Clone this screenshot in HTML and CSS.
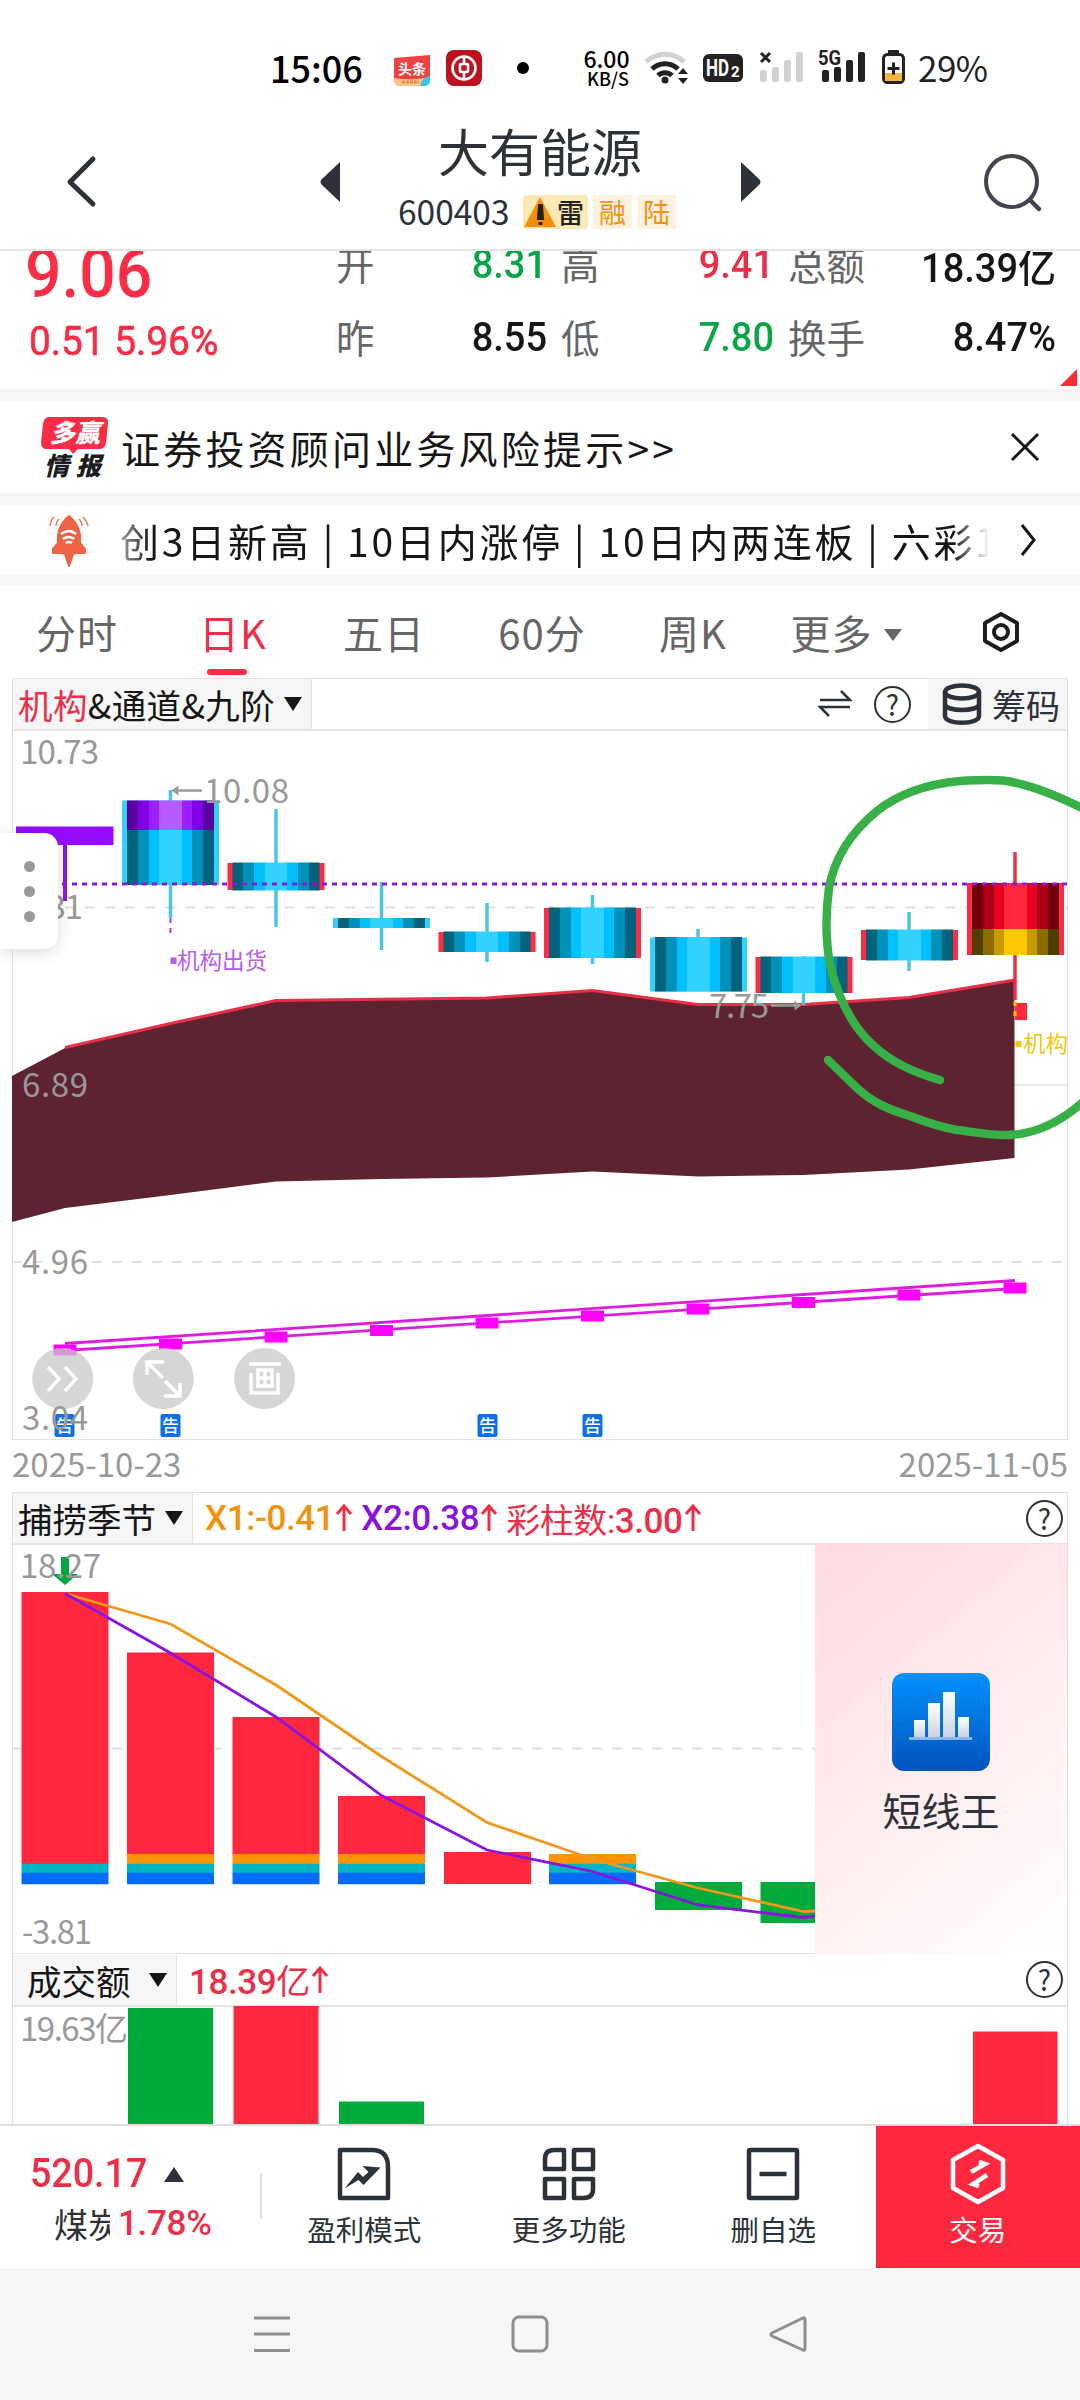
FILE: index.html
```
<!DOCTYPE html>
<html lang="zh-CN">
<head>
    <meta charset="UTF-8">
    <meta name="viewport" content="width=device-width, initial-scale=1.0">
    <title>大有能源 600403</title>
    <link rel="stylesheet" href="styles.css">
</head>
<body>
    <!-- 状态栏 -->
    <div class="status-bar">
        <span class="clock">15:06</span>
        <svg class="app-icons" width="140" height="44" viewBox="390 46 140 44">
            <path d="M394 58l36-3v24q0 7-7 7h-22q-7 0-7-7z" fill="#f04142"/>
            <path d="M394 78q18 3 36-1v2q0 7-7 7h-22q-7 0-7-7z" fill="#fbc48a"/>
            <path d="M430 76v4q0 6-6 6h-4q2-9 10-10z" fill="#35c3ee"/>
            <text x="398" y="74" class="app-text">头条</text>
            <path d="M402 82h17" stroke="#e88a4a" stroke-width="3" stroke-dasharray="3 1"/>
            <rect x="446" y="50" width="36" height="36" rx="8" fill="#bd1120"/>
            <circle cx="464" cy="68" r="11.500" fill="none" stroke="#fff" stroke-width="2.600"/>
            <path d="M464 57v7M464 72v7" stroke="#fff" stroke-width="2.600"/>
            <rect x="460" y="64" width="8" height="8" rx="1" fill="none" stroke="#fff" stroke-width="2.600"/>
            <circle cx="523" cy="68" r="6" fill="#000"/>
        </svg>
        <span class="speed"><b>6.00</b><i>KB/S</i></span>
        <svg class="signals" width="270" height="44" viewBox="640 46 270 44">
            <g fill="none" stroke-width="5">
                <path d="M646 62a27 27 0 0 1 38 0" stroke="#d2d2d2"/>
                <path d="M652 69a18.500 18.500 0 0 1 26 0" stroke="#222"/>
                <path d="M658 75.500a10 10 0 0 1 14 0" stroke="#222"/>
            </g>
            <circle cx="665" cy="80" r="3.500" fill="#222"/>
            <path d="M683 68l5 6h-10zM683 84l-5-6h10z" fill="#222"/>
            <rect x="703" y="54" width="40" height="28" rx="6" fill="#222"/>
            <text x="706" y="76" class="hd" textLength="23" lengthAdjust="spacingAndGlyphs">HD</text>
            <text x="731" y="77" class="hd small" textLength="9">2</text>
            <path d="M761 53l9 9M770 53l-9 9" stroke="#222" stroke-width="3"/>
            <g fill="#d2d2d2">
                <rect x="760" y="70" width="7" height="12" rx="2"/><rect x="772" y="67" width="7" height="15" rx="2"/>
                <rect x="784" y="60" width="7" height="22" rx="2"/><rect x="796" y="52" width="7" height="30" rx="2"/>
            </g>
            <g fill="#222">
                <rect x="822" y="70" width="7" height="12" rx="2"/><rect x="834" y="67" width="7" height="15" rx="2"/>
                <rect x="846" y="60" width="7" height="22" rx="2"/><rect x="858" y="52" width="7" height="30" rx="2"/>
            </g>
            <text x="818" y="65" class="net" textLength="23" lengthAdjust="spacingAndGlyphs">5G</text>
            <rect x="883.500" y="54.500" width="20" height="28" rx="4" fill="#fff" stroke="#222" stroke-width="3"/>
            <rect x="888" y="50" width="11" height="4" rx="1" fill="#222"/>
            <rect x="885" y="73" width="17" height="8" fill="#f6b63c"/>
            <path d="M887.500 68.500h12M893.500 62.500v12" stroke="#222" stroke-width="3"/>
        </svg>
        <span class="battery">29%</span>
    </div>

    <!-- 标题栏 -->
    <div class="header">
        <svg width="50" height="60" viewBox="60 151 50 60"><path d="M93 159L70 182l23 22" fill="none" stroke="#2c3238" stroke-width="5" stroke-linecap="round" stroke-linejoin="round"/></svg>
        <svg class="prev" width="24" height="44" viewBox="318 159 24 44"><path d="M340 162v40l-18-17q-3-3 0-6z" fill="#2c3238"/></svg>
        <div class="stock">
            <h1>大有能源</h1>
            <div class="code">
                <span class="digits">600403</span>
                <span class="tag mine"><svg width="34" height="34" viewBox="0 0 34 34"><path d="M17 2L33 32H1z" fill="#f98e08"/><path d="M17 11l-1 12h3l-1-12zM17.500 27v3" stroke="#222" stroke-width="4"/></svg>雷</span>
                <span class="tag">融</span>
                <span class="tag">陆</span>
            </div>
        </div>
        <svg class="next" width="24" height="44" viewBox="739 159 24 44"><path d="M741 162v40l18-17q3-3 0-6z" fill="#2c3238"/></svg>
        <svg class="search" width="64" height="64" viewBox="980 149 64 64"><circle cx="1011.500" cy="181.500" r="25.500" fill="none" stroke="#44444e" stroke-width="4"/><path d="M1030 200l9 9" stroke="#44444e" stroke-width="4.500" stroke-linecap="round"/></svg>
    </div>

    <!-- 行情 -->
    <div class="quote">
        <div class="price">
            <div class="last">9.06</div>
            <div class="change">0.51 5.96%</div>
        </div>
        <div class="quote-grid">
            <span>开</span><b class="green">8.31</b><span>高</span><b class="red">9.41</b><span>总额</span><b>18.39<em>亿</em></b>
            <span>昨</span><b>8.55</b><span>低</span><b class="green">7.80</b><span>换手</span><b>8.47%</b>
        </div>
        <i class="corner"></i>
    </div>

    <div class="notice">
        <svg width="70" height="66" viewBox="40 410 70 66">
            <path d="M49 413h53q7 0 6 7l-2 19q-1 6-7 6h-21l-5 5-4-5h-22q-6 0-6-6l2-19q1-7 6-7z" fill="#fa2c46"/>
            <text x="50" y="438" class="logo-text" fill="#fff" textLength="50">多赢</text>
            <text x="44" y="471" class="logo-text" fill="#1d1d1f" textLength="57">情报</text>
        </svg>
        <span>证券投资顾问业务风险提示&gt;&gt;</span>
        <svg class="close" width="34" height="34" viewBox="0 0 34 34"><path d="M4 4l26 26M30 4L4 30" stroke="#161616" stroke-width="3"/></svg>
    </div>

    <div class="ticker">
        <svg width="46" height="54" viewBox="46 511 46 54">
            <path d="M69 514q9 7 11 19v8l5 6v4h-8l-4 1-4 12-4-12-4-1h-8v-4l5-6v-8q2-12 11-19z" fill="#ee6345" stroke="#ee6345" stroke-width="2" stroke-linejoin="round"/>
            <path d="M61 532q8-6 15 0M63 537q6-4 11 0M66 541q3-2 6 0" fill="none" stroke="#fff" stroke-width="2.500"/>
            <path d="M54 515q-4 4-4 9M59 517q-3 3-3 7M83 515q4 4 5 9M79 517q3 3 3 7" fill="none" stroke="#f0775c" stroke-width="1.500"/>
        </svg>
        <div class="ticker-text">创3日新高<s>|</s>10日内涨停<s>|</s>10日内两连板<s>|</s>六彩1</div>
        <svg class="more" width="20" height="36" viewBox="0 0 20 36"><path d="M3 3l12 15L3 33" fill="none" stroke="#161616" stroke-width="3"/></svg>
    </div>

    <!-- 周期切换 -->
    <div class="tabs">
        <span>分时</span>
        <span class="active">日K</span>
        <span>五日</span>
        <span>60分</span>
        <span>周K</span>
        <span>更多<svg width="18" height="12" viewBox="0 0 18 12"><path d="M0 0h18L9 12z" fill="#666"/></svg></span>
        <svg class="setting" width="40" height="42" viewBox="0 0 40 42"><path d="M20 3l16 9v18l-16 9-16-9V12z" fill="none" stroke="#1d1d1f" stroke-width="4" stroke-linejoin="round"/><circle cx="20" cy="21" r="7" fill="none" stroke="#1d1d1f" stroke-width="4"/></svg>
    </div>

    <!-- K线主图 -->
    <div class="panel main-panel">
        <div class="panel-head">
            <div class="indicator main"><span class="red">机构</span>&amp;通道&amp;九阶<i class="caret"></i></div>
            <svg class="swap" width="34" height="32" viewBox="0 0 34 32"><path d="M2 12h30L23 3M32 19H2l9 9" fill="none" stroke="#2c3238" stroke-width="2.500"/></svg>
            <span class="help">?</span>
            <div class="chips">
                <svg width="40" height="42" viewBox="0 0 40 42"><g fill="none" stroke="#2c3238" stroke-width="4.500"><ellipse cx="20" cy="9" rx="17" ry="6.500"/><path d="M3 9v24c0 9 34 9 34 0V9M3 21c0 8 34 8 34 0"/></g></svg>
                筹码
            </div>
        </div>
        <svg class="chart" width="1054" height="707" viewBox="13 731 1054 707">
            <defs>
                <linearGradient id="blue">
                    <stop offset=".125" stop-color="#00627b"/><stop offset=".125" stop-color="#0090b8"/>
                    <stop offset=".25" stop-color="#0090b8"/><stop offset=".25" stop-color="#00bffa"/>
                    <stop offset=".370" stop-color="#00bffa"/><stop offset=".370" stop-color="#33d1ff"/>
                    <stop offset=".630" stop-color="#33d1ff"/><stop offset=".630" stop-color="#00bffa"/>
                    <stop offset=".75" stop-color="#00bffa"/><stop offset=".75" stop-color="#0090b8"/>
                    <stop offset=".875" stop-color="#0090b8"/><stop offset=".875" stop-color="#00627b"/>
                </linearGradient>
                <linearGradient id="purple">
                    <stop offset=".125" stop-color="#5b00a0"/><stop offset=".125" stop-color="#8200e2"/>
                    <stop offset=".25" stop-color="#8200e2"/><stop offset=".25" stop-color="#9c20ff"/>
                    <stop offset=".370" stop-color="#9c20ff"/><stop offset=".370" stop-color="#b65bff"/>
                    <stop offset=".630" stop-color="#b65bff"/><stop offset=".630" stop-color="#9c20ff"/>
                    <stop offset=".75" stop-color="#9c20ff"/><stop offset=".75" stop-color="#8200e2"/>
                    <stop offset=".875" stop-color="#8200e2"/><stop offset=".875" stop-color="#5b00a0"/>
                </linearGradient>
                <linearGradient id="crimson">
                    <stop offset=".125" stop-color="#70000e"/><stop offset=".125" stop-color="#aa0016"/>
                    <stop offset=".25" stop-color="#aa0016"/><stop offset=".25" stop-color="#e8001f"/>
                    <stop offset=".370" stop-color="#e8001f"/><stop offset=".370" stop-color="#ff293f"/>
                    <stop offset=".630" stop-color="#ff293f"/><stop offset=".630" stop-color="#e8001f"/>
                    <stop offset=".75" stop-color="#e8001f"/><stop offset=".75" stop-color="#aa0016"/>
                    <stop offset=".875" stop-color="#aa0016"/><stop offset=".875" stop-color="#70000e"/>
                </linearGradient>
                <linearGradient id="gold">
                    <stop offset=".125" stop-color="#4e3e00"/><stop offset=".125" stop-color="#8a6c00"/>
                    <stop offset=".25" stop-color="#8a6c00"/><stop offset=".25" stop-color="#c69a00"/>
                    <stop offset=".370" stop-color="#c69a00"/><stop offset=".370" stop-color="#ffc805"/>
                    <stop offset=".630" stop-color="#ffc805"/><stop offset=".630" stop-color="#c69a00"/>
                    <stop offset=".75" stop-color="#c69a00"/><stop offset=".75" stop-color="#8a6c00"/>
                    <stop offset=".875" stop-color="#8a6c00"/><stop offset=".875" stop-color="#4e3e00"/>
                </linearGradient>
                <clipPath id="plot"><rect x="12" y="731" width="1055" height="707"/></clipPath>
            </defs>

            <!-- 网格 -->
            <path class="grid" d="M65 907.500H1067M12 1262H1067"/>
            <path d="M12 1085H1067" stroke="#e9e9e9" stroke-width="2"/>

            <!-- 通道 -->
            <path d="M12 1076L65 1048 170.500 1023.500 276 1000.500 487 998 592.500 990.500 698 1004.500 803.500 1004.500 909 997.500 1014.500 980V1158L909 1169.500 803.500 1175 698 1176.500 592.500 1171.500 487 1177.500 381.500 1179 276 1181.500 170.500 1195 65 1208 12 1222z" fill="#5e2331"/>
            <path d="M65 1047.500L170.500 1023.500 276 1000.500 487 998 592.500 990.500 698 1004.500 803.500 1004.500 909 997.500 1015 980" fill="none" stroke="#e83049" stroke-width="3"/>

            <!-- 影线 -->
            <g fill="none" stroke="#4cc4e6" stroke-width="3.500">
                <path d="M170.500 790V918M276 809V927M381.500 882V950M487 903V962M592.500 895V964M698 929V940M803.500 956V1005M909 912V971"/>
            </g>
            <path d="M1015 852V1000" stroke="#e83049" stroke-width="3.500"/>
            <path d="M170.500 918v16" stroke="#a93df0" stroke-width="2" stroke-dasharray="5 5"/>

            <!-- 蜡烛 -->
            <path d="M65 845v56" stroke="#8a18e8" stroke-width="4"/>
            <rect x="16" y="826.500" width="97.500" height="18.500" fill="#960cff"/>
            <g fill="#33d1ff">
                <rect x="122" y="800.500" width="97" height="84.500"/>
                <rect x="333" y="918" width="97" height="10"/>
                <rect x="650" y="937.500" width="97" height="54"/>
            </g>
            <g fill="#fc2c44">
                <rect x="227.500" y="863" width="97" height="27"/>
                <rect x="438.500" y="932" width="97" height="20"/>
                <rect x="544" y="908" width="97" height="50"/>
                <rect x="755.500" y="957" width="97" height="36"/>
                <rect x="861" y="930" width="97" height="30"/>
                <rect x="967" y="883" width="97" height="72"/>
            </g>
            <rect x="127" y="800.500" width="87" height="29.500" fill="url(#purple)"/>
            <g fill="url(#blue)">
                <rect x="127" y="830" width="87" height="55"/>
                <rect x="232.500" y="862.500" width="87" height="28"/>
                <rect x="338" y="918" width="87" height="10"/>
                <rect x="443.500" y="931.500" width="87" height="20.500"/>
                <rect x="549" y="907.500" width="87" height="50.500"/>
                <rect x="655" y="937" width="87" height="54.500"/>
                <rect x="760.500" y="956.500" width="87" height="36.500"/>
                <rect x="866" y="929.500" width="87" height="31"/>
            </g>
            <rect x="972" y="883" width="87" height="46" fill="url(#crimson)"/>
            <rect x="972" y="929" width="87" height="26" fill="url(#gold)"/>
            <path d="M62 884H1067" stroke="#8b1ad6" stroke-width="3" stroke-dasharray="5 5"/>

            <rect x="1015" y="1003" width="12" height="17" fill="#ff283e"/>
            <path d="M1015 1001v5M1015 1011v5" stroke="#ffc805" stroke-width="3"/>
            <rect x="170.500" y="957.500" width="6" height="6.500" fill="#b45cf5"/>
            <text class="mark" x="177" y="968.500" fill="#b45cf0">机构出货</text>
            <g clip-path="url(#plot)">
                <rect x="1015.500" y="1041" width="6" height="6" fill="#ffc40a"/>
                <text class="mark" x="1023" y="1052" fill="#f0c419">机构</text>
            </g>

            <!-- 九阶线 -->
            <path d="M65 1343.500L1015 1280.500M65 1350.500L1015 1288.500" fill="none" stroke="#de1cde" stroke-width="2.800"/>
            <path d="M53.500 1350h23M159 1344h23M264.500 1337h23M370 1330.500h23M475.500 1323h23M581 1316h23M686.500 1309h23M792 1302.500h23M897.500 1295h23M1003.500 1288h23" stroke="#ff00ff" stroke-width="11"/>

            <!-- 悬浮按钮 -->
            <g fill="#c8c8c8" fill-opacity=".75">
                <circle cx="62.700" cy="1378.500" r="30.500"/><circle cx="163.300" cy="1378.500" r="30.500"/><circle cx="264.500" cy="1378.500" r="30.500"/>
            </g>
            <g fill="none" stroke="#fff" stroke-width="3.500">
                <path d="M48 1367l11 12-11 12M65 1367l11 12-11 12"/>
                <path d="M163 1378l-16-16M147 1375v-13h17M165 1381l15 15M180 1383v13h-16"/>
                <path d="M249 1364h32M251 1373v20h27v-20M258 1370h14v16h-14zM265 1370v16M258 1378h14"/>
            </g>

            <!-- 公告 -->
            <g fill="#0c70ea">
                <rect x="54.500" y="1414" width="20" height="23" rx="2"/><rect x="160.500" y="1414" width="20" height="23" rx="2"/>
                <rect x="477.500" y="1414" width="20" height="23" rx="2"/><rect x="582.500" y="1414" width="20" height="23" rx="2"/>
            </g>
            <g class="bulletin">
                <text x="64.500" y="1432">告</text><text x="170.500" y="1432">告</text><text x="487.500" y="1432">告</text><text x="592.500" y="1432">告</text>
            </g>

            <g class="axis">
                <text x="20" y="764" textLength="79">10.73</text>
                <text x="22" y="919" textLength="61">8.31</text>
                <text x="22" y="1097" textLength="66">6.89</text>
                <text x="22" y="1274" textLength="66">4.96</text>
                <text x="22" y="1430" textLength="66">3.04</text>
                <text x="204" y="803" textLength="85">10.08</text>
                <text x="709" y="1018" textLength="60">7.75</text>
            </g>
            <path d="M178 790.500h24M771 1005.500h24" stroke="#999" stroke-width="2.500"/>
            <path d="M171.500 790.500l7-5v10zM801.500 1005.500l-7-5v10z" fill="#999"/>

            <!-- 手绘标注 -->
            <g fill="none" stroke="#38b048" stroke-width="8.500" stroke-linecap="round" stroke-linejoin="round">
                <path d="M940 1080C915 1073 890 1061 874 1046C852 1027 838 997 830 965C825 937 826 910 829 888C835 855 855 829 877 811C901 792 928 784 960 781C977 780 990 779.500 1003 780.500C1030 784 1058 796 1084 809"/>
                <path d="M828 1060L857 1088C873 1103 890 1110 910 1116C928 1123 940 1127 957 1130C975 1132 990 1135.500 1008 1135C1038 1134 1063 1120 1084 1101"/>
            </g>
        </svg>
        <div class="drawer"><i></i><i></i><i></i></div>
    </div>
    <div class="dates"><span>2025-10-23</span><span>2025-11-05</span></div>

    <!-- 捕捞季节 -->
    <div class="panel fish-panel">
        <div class="panel-head">
            <div class="indicator fish">捕捞季节<i class="caret"></i></div>
            <div class="values">
                <span class="orange">X1:-0.41</span><svg width="18" height="28" viewBox="0 0 18 28"><path d="M9 27V3M2 10l7-8 7 8"/></svg>
                <span class="violet">X2:0.38</span><svg width="18" height="28" viewBox="0 0 18 28"><path d="M9 27V3M2 10l7-8 7 8"/></svg>
                <span class="red"><em>彩柱数:</em>3.00</span><svg width="18" height="28" viewBox="0 0 18 28"><path d="M9 27V3M2 10l7-8 7 8"/></svg>
            </div>
            <span class="help">?</span>
        </div>
        <div class="fish-body">
            <svg class="chart" width="802" height="408" viewBox="13 1545 802 408">
                <path class="grid" d="M12 1748.500H815"/>
                <g fill="#ff283e">
                    <rect x="21.500" y="1592" width="87" height="272"/><rect x="127" y="1652.500" width="87" height="202"/>
                    <rect x="232.500" y="1717" width="87" height="138"/><rect x="338" y="1796" width="87" height="59"/>
                    <rect x="444" y="1852" width="87" height="32"/>
                </g>
                <path d="M127 1859h87M232.500 1859h87M338 1859h87M549 1859h87" stroke="#ff9300" stroke-width="10"/>
                <path d="M21.500 1868.500h87M127 1868.500h87M232.500 1868.500h87M338 1868.500h87M549 1868.500h87" stroke="#00b4c4" stroke-width="9.500"/>
                <path d="M21.500 1878.500h87M127 1878.500h87M232.500 1878.500h87M338 1878.500h87M549 1878.500h87" stroke="#076cfb" stroke-width="11.500"/>
                <rect x="655" y="1882" width="87" height="28" fill="#00aa3b"/>
                <rect x="760.500" y="1882" width="60" height="41" fill="#00aa3b"/>
                <path d="M61 1557h8v17h9l-13 11-13-11h9z" fill="#00a844"/>
                <path d="M65 1593.500L170.500 1624 276 1685 381.500 1756.500 487 1822.500 592.500 1859 698 1888 803.500 1911.500 815 1911" fill="none" stroke="#ee981c" stroke-width="2.800"/>
                <path d="M65 1593.500L170.500 1653 276 1717 381.500 1795.500 487 1850 592.500 1871.500 698 1905 803.500 1917.500 815 1916" fill="none" stroke="#8a14dc" stroke-width="2.800"/>
                <g class="axis">
                    <text x="20" y="1578" textLength="81">18.27</text>
                    <text x="22" y="1944" textLength="70">-3.81</text>
                </g>
            </svg>
            <div class="promo">
                <svg width="98" height="98" viewBox="892 1673 98 98">
                    <linearGradient id="app" x2="0" y2="1"><stop stop-color="#0392ff"/><stop offset="1" stop-color="#0253bd"/></linearGradient>
                    <linearGradient id="bar" x2="0" y2="1"><stop stop-color="#fff"/><stop offset="1" stop-color="#c9d2e2"/></linearGradient>
                    <rect x="892" y="1673" width="98" height="98" rx="12" fill="url(#app)"/>
                    <g fill="url(#bar)"><rect x="914" y="1720" width="11" height="18"/><rect x="928" y="1703" width="12" height="35"/><rect x="943" y="1692" width="12" height="46"/><rect x="958" y="1717" width="11" height="21"/></g>
                    <path d="M909 1738.500h63" stroke="#8db8ee" stroke-width="3"/>
                </svg>
                <span>短线王</span>
            </div>
        </div>
    </div>

    <!-- 成交额 -->
    <div class="panel amount-panel">
        <div class="panel-head">
            <div class="indicator amount">成交额<i class="caret"></i></div>
            <div class="values">
                <span class="red">18.39<em>亿</em></span><svg width="18" height="28" viewBox="0 0 18 28"><path d="M9 27V3M2 10l7-8 7 8"/></svg>
            </div>
            <span class="help">?</span>
        </div>
        <svg class="chart" width="1054" height="117" viewBox="13 2007 1054 117">
            <text class="axis" x="20" y="2040.500" textLength="108">19.63亿</text>
            <rect x="128" y="2008" width="85" height="116" fill="#00aa3b"/>
            <rect x="233.500" y="2006" width="85" height="118" fill="#ff283e"/>
            <rect x="339" y="2101.500" width="85" height="22.500" fill="#00aa3b"/>
            <rect x="973" y="2031.500" width="84.500" height="92.500" fill="#ff283e"/>
        </svg>
    </div>

    <!-- 底部工具栏 -->
    <div class="toolbar">
        <div class="sector">
            <div class="index"><b>520.17</b><svg width="20" height="15" viewBox="0 0 20 15"><path d="M10 0l10 15H0z" fill="#2c3238"/></svg></div>
            <div class="name"><span>煤炭</span><b>1.78%</b></div>
        </div>
        <div class="tool">
            <svg width="56" height="56" viewBox="0 0 56 56"><path d="M4 4h32q16 0 16 17v31H4z" fill="none" stroke="#2c3238" stroke-width="4.500" stroke-linejoin="round"/><path d="M8.500 42.500l13.500-16.500 5 5 5.500-5-6-6 18 1.500-17 17.500-5-5z" fill="#2c3238"/></svg>
            <span>盈利模式</span>
        </div>
        <div class="tool">
            <svg width="56" height="56" viewBox="0 0 56 56"><g fill="none" stroke="#2c3238" stroke-width="4.500" stroke-linejoin="round"><path d="M13 4h10v19H4V13q0-9 9-9zM33 4h19v19H33zM4 33h19v19H4zM33 33h19v10q0 9-9 9H33z"/></g></svg>
            <span>更多功能</span>
        </div>
        <div class="tool">
            <svg width="56" height="56" viewBox="0 0 56 56"><rect x="4" y="4" width="48" height="48" rx="1" fill="none" stroke="#2c3238" stroke-width="4.500"/><path d="M14.500 28h27" stroke="#2c3238" stroke-width="4.500"/></svg>
            <span>删自选</span>
        </div>
        <div class="tool trade">
            <svg width="56" height="62" viewBox="0 0 56 62"><path d="M28 3l25 14v28L28 59 3 45V17z" fill="none" stroke="#fff" stroke-width="4.500" stroke-linejoin="round"/><path d="M21 29l14-8-6-2M37 32l-14 9 6 2" fill="none" stroke="#fff" stroke-width="4.500"/></svg>
            <span>交易</span>
        </div>
    </div>

    <!-- 系统导航 -->
    <div class="nav-bar">
        <svg width="40" height="40" viewBox="0 0 40 40"><path d="M2 4h36M2 20h36M2 36.500h36"/></svg>
        <svg width="40" height="40" viewBox="0 0 40 40"><rect x="3" y="3" width="34" height="34" rx="6"/></svg>
        <svg width="40" height="40" viewBox="0 0 40 40"><path d="M37 6v29q0 2-2 1L4 22q-2-1.500 0-3L35 4q2-1 2 2z"/></svg>
    </div>
</body>
</html>
```

FILE: styles.css
```
* {
    box-sizing: border-box;
}

body {
    margin: 0;
    width: 1080px;
    height: 2400px;
    overflow: hidden;
    background: #fff;
    color: #161616;
    font-family: "Noto Sans CJK SC", sans-serif;
    display: flex;
    flex-direction: column;
}

svg {
    display: block;
    flex: none;
}

em, i {
    font-style: normal;
}

.red { color: #ec2f48; }
.green { color: #0ba548; }
.orange { color: #f0930f; }
.violet { color: #8a14dc; }

/* 状态栏 */
.status-bar {
    height: 112px;
    padding: 24px 0 0 270px;
    display: flex;
    align-items: center;
    color: #000;
}

.clock, .battery {
    width: 120px;
    margin-top: -3px;
    font: 500 36px/44px "Noto Sans CJK SC", sans-serif;
    white-space: nowrap;
}

.battery {
    color: #222;
    font-weight: 400;
    margin-left: 8px;
    font-size: 35px;
    letter-spacing: -0.500px;
}

.app-text {
    font-weight: 700;
    font-size: 14px;
    fill: #fff;
}

.speed {
    width: 60px;
    margin-left: 49px;
    text-align: center;
    line-height: 20px;
    font-weight: 500;
}

.speed b, .speed i {
    display: block;
    margin-left: -5px;
    font-size: 23px;
    font-weight: 500;
}

.speed i {
    margin-left: -2px;
    font-size: 18px;
}

.signals {
    margin-left: 1px;
}

.hd {
    font: 700 23px Roboto, sans-serif;
    fill: #fff;
}

.hd.small {
    font-size: 15px;
}

.net {
    font: 700 20px Roboto, sans-serif;
    fill: #222;
}

/* 标题栏 */
.header {
    height: 139px;
    padding: 0 36px 0 60px;
    border-bottom: 2px solid #e4e4e4;
    display: flex;
    align-items: center;
    color: #2c3238;
}

.header .prev {
    margin-left: 208px;
}

.stock {
    width: 284px;
    height: 136px;
    margin-left: 56px;
    padding-top: 1px;
}

.header .next {
    margin-left: 57px;
}

.header .search {
    margin-left: 217px;
}

h1 {
    margin: 0;
    text-align: center;
    font-size: 51px;
    line-height: 72px;
    font-weight: 400;
}

.code {
    display: flex;
    align-items: center;
    gap: 5px;
    height: 52px;
}

.digits {
    width: 120px;
    padding-bottom: 2px;
    font-size: 33.500px;
}

.tag {
    width: 39px;
    height: 34px;
    background: #fff1e0;
    color: #f3920c;
    font-size: 27px;
    line-height: 33px;
    text-align: center;
}

.tag.mine {
    width: 65px;
    display: flex;
    align-items: center;
    background: #fde9b4;
    color: #222;
    font-weight: 500;
    border-radius: 4px;
}

/* 行情 */
.quote {
    height: 138px;
    overflow: hidden;
    position: relative;
    display: flex;
}

.price {
    width: 336px;
    padding-left: 25px;
    color: #fa2c46;
    font-family: Roboto, sans-serif;
    font-weight: 500;
}

.last {
    margin-top: -17px;
    font-size: 69px;
    line-height: 80px;
    transform: scaleX(0.930);
    transform-origin: 0 0;
}

.change {
    margin: 4px 0 0 4px;
    font-size: 40px;
    line-height: 48px;
    font-weight: 400;
    -webkit-text-stroke: 0.600px;
    white-space: nowrap;
    transform: scaleX(0.970);
    transform-origin: 0 0;
}

.quote-grid {
    display: grid;
    grid-template-columns: 37px 174px 51px 176px 90px 192px;
    grid-template-rows: 73px 73px;
    margin-top: -24px;
    align-items: center;
    white-space: nowrap;
}

.quote-grid span {
    margin-top: -2px;
    font-size: 38.500px;
    color: #666;
}

.quote-grid span:nth-child(6n + 3),
.quote-grid span:nth-child(6n + 5) {
    padding-left: 14px;
}

.quote-grid b {
    margin-top: 2px;
    font: 500 40px Roboto, "Noto Sans CJK SC", sans-serif;
    text-align: right;
    transform: scaleX(0.950);
    transform-origin: 100% 0;
}

.corner {
    position: absolute;
    right: 3px;
    bottom: 3px;
    border-left: 17px solid transparent;
    border-bottom: 17px solid #fa2c36;
}

/* 资讯条 */
.notice, .ticker {
    display: flex;
    align-items: center;
    border-top: 12px solid #f6f6f6;
    font-size: 39px;
    letter-spacing: 3.200px;
    white-space: nowrap;
}

.notice {
    height: 104px;
    padding: 0 38px 0 40px;
}

.notice span {
    margin-left: 11px;
}

.logo-text {
    font-size: 25px;
    font-weight: 900;
    font-style: italic;
    letter-spacing: 0;
}

.close, .more {
    margin-left: auto;
}

.ticker {
    height: 93px;
    padding: 0 41px 0 46px;
    border-bottom: 12px solid #f6f6f6;
}

.ticker-text {
    width: 896px;
    margin-left: 28px;
    margin-right: -20px;
    overflow: hidden;
    line-height: 56px;
    letter-spacing: 2.800px;
    -webkit-mask-image: linear-gradient(90deg, rgba(0, 0, 0, 0.400), #000 3.500%, #000 93%, transparent 97%);
    mask-image: linear-gradient(90deg, rgba(0, 0, 0, 0.400), #000 3.500%, #000 93%, transparent 97%);
}

.ticker-text s {
    text-decoration: none;
    padding: 0 11px 0 11px;
}

/* 周期切换 */
.tabs {
    height: 92px;
    display: grid;
    grid-template-columns: 154px 162px 136px 180px 122px 184px 126px;
    align-items: center;
    justify-items: center;
    font-size: 40px;
    letter-spacing: 1px;
    color: #666;
}

.tabs span {
    height: 92px;
    line-height: 92px;
    white-space: nowrap;
}

.tabs .active {
    color: #ec2f48;
    padding-right: 4px;
    position: relative;
}

.tabs .active::after {
    content: "";
    position: absolute;
    left: 8px;
    bottom: 3px;
    width: 40px;
    height: 6px;
    border-radius: 3px;
    background: #fa2c46;
}

.tabs span svg {
    display: inline-block;
    vertical-align: 8px;
    margin-left: 11px;
}

/* 图表面板 */
.panel {
    position: relative;
    width: 1056px;
    margin-left: 12px;
    border: 1px solid #e2e2e2;
}

.panel-head {
    height: 52px;
    border-bottom: 2px solid #e4e4e4;
    display: flex;
    align-items: center;
    font-size: 34.500px;
}

.indicator {
    height: 50px;
    display: flex;
    align-items: center;
    padding-left: 5px;
    background: #f6f6f6;
    border-right: 1px solid #e2e2e2;
    white-space: nowrap;
}

.indicator.main { width: 299px; letter-spacing: 0.400px; }
.indicator.fish { width: 180px; }
.indicator.amount { width: 164px; padding-left: 14px; }

.caret {
    margin-left: 9px;
    border: 9px solid transparent;
    border-top: 14px solid #161616;
    border-bottom: 0;
}

.amount .caret {
    margin-left: 18px;
}

.swap {
    margin-left: 506px;
}

.help {
    width: 37px;
    height: 37px;
    border: 2.500px solid #2c3238;
    border-radius: 50%;
    font-size: 28px;
    line-height: 32px;
    text-align: center;
    color: #2c3238;
    margin-left: auto;
    margin-right: 4px;
}

.main-panel .help {
    margin: 0 17px 0 22px;
}

.chips {
    flex: 1;
    height: 50px;
    padding-left: 14px;
    display: flex;
    align-items: center;
    gap: 10px;
    background: #f6f6f6;
    color: #2c3238;
    font-size: 34px;
    white-space: nowrap;
}

.chart {
    overflow: visible;
}

.grid {
    fill: none;
    stroke: #e0e0e0;
    stroke-width: 2;
    stroke-dasharray: 10 10;
}

.axis {
    font-size: 33px;
    fill: #999;
}

.mark {
    font-size: 22.500px;
}

.bulletin {
    font-size: 17px;
    font-weight: 500;
    fill: #fff;
    text-anchor: middle;
}

.main-panel {
    height: 762px;
}

.drawer {
    position: absolute;
    left: -13px;
    top: 154px;
    width: 58px;
    height: 116px;
    display: flex;
    flex-direction: column;
    align-items: center;
    justify-content: center;
    gap: 14px;
    background: #fff;
    border-radius: 0 14px 14px 0;
    box-shadow: 0 3px 16px rgba(0, 0, 0, 0.150);
}

.drawer i {
    width: 11px;
    height: 11px;
    border-radius: 50%;
    background: #999;
}

.dates {
    height: 52px;
    padding: 0 12px;
    display: flex;
    justify-content: space-between;
    font-size: 33px;
    line-height: 46px;
    color: #999;
}

/* 指标数值 */
.values {
    display: flex;
    align-items: center;
    padding-left: 12px;
    font: 500 35px Roboto, "Noto Sans CJK SC", sans-serif;
    letter-spacing: -0.400px;
    white-space: nowrap;
}

.values em {
    font-size: 34px;
    font-weight: 400;
}

.values svg {
    margin: 0 8px 0 1px;
    fill: none;
    stroke: #ec2f48;
    stroke-width: 3;
}

.fish-panel {
    height: 462px;
}

.fish-body {
    display: flex;
}

.fish-body .chart {
    overflow: hidden;
}

.promo {
    width: 252px;
    height: 410px;
    margin-top: -1px;
    padding-top: 129px;
    display: flex;
    flex-direction: column;
    align-items: center;
    background: linear-gradient(140deg, #ffdbe1, #ffecee 50%, #fff);
    color: #2c3238;
    font-size: 39px;
}

.promo span {
    margin-top: 10px;
}

.amount-panel {
    height: 170px;
    border-top: 0;
    border-bottom: 0;
}

.amount-panel .panel-head {
    height: 53px;
}

/* 底部工具栏 */
.toolbar {
    height: 144px;
    border-top: 2px solid #dedede;
    display: flex;
    background: #fff;
    position: relative;
}

.sector {
    width: 262px;
    padding: 23px 0 0 30px;
    font-family: Roboto, sans-serif;
    color: #ec2f48;
    background: linear-gradient(#ddd, #ddd) right 47px / 2px 46px no-repeat;
}

.index {
    display: flex;
    align-items: center;
    line-height: 50px;
}

.index b {
    width: 134px;
    font-size: 40px;
    font-weight: 500;
    transform: scaleX(0.940);
    transform-origin: 0 0;
}

.name {
    display: flex;
    align-items: center;
    height: 48px;
    padding-left: 24px;
}

.name span {
    width: 56px;
    margin-right: 8px;
    overflow: hidden;
    white-space: nowrap;
    font: 34px "Noto Sans CJK SC", sans-serif;
    color: #2c3238;
}

.name b {
    font-size: 35px;
    font-weight: 500;
    letter-spacing: -0.300px;
}

.tool {
    width: 204.500px;
    display: flex;
    flex-direction: column;
    align-items: center;
    padding-top: 20px;
    font-size: 28.500px;
    line-height: 42px;
    color: #2c3238;
}

.tool span {
    margin-top: 6px;
}

.trade {
    padding-top: 17px;
    background: #ff283e;
    color: #fff;
}

.trade span {
    margin-top: 3px;
}

/* 系统导航 */
.nav-bar {
    flex: 1;
    display: flex;
    gap: 218px;
    padding: 46px 0 0 252px;
    background: #f6f6f6;
}

.nav-bar svg {
    fill: none;
    stroke: #8e8e8e;
    stroke-width: 3;
}
```
